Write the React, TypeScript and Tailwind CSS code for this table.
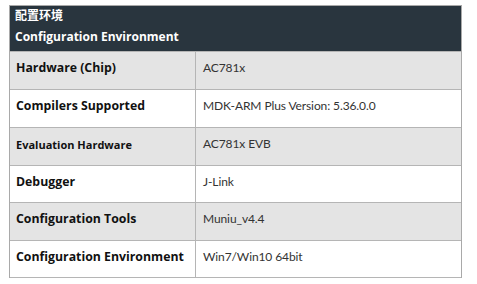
import React from "react";

type Row = {
  label: string;
  value: string;
  shaded: boolean;
  h: string;
  small?: boolean;
};

const rows: Row[] = [
  { label: "Hardware (Chip)", value: "AC781x", shaded: true, h: "h-[38px]" },
  { label: "Compilers Supported", value: "MDK-ARM Plus Version: 5.36.0.0", shaded: false, h: "h-[38px]" },
  { label: "Evaluation Hardware", value: "AC781x EVB", shaded: true, h: "h-[38px]", small: true },
  { label: "Debugger", value: "J-Link", shaded: false, h: "h-[37px]" },
  { label: "Configuration Tools", value: "Muniu_v4.4", shaded: true, h: "h-[38px]" },
  { label: "Configuration Environment", value: "Win7/Win10 64bit", shaded: false, h: "h-[37px]" },
];

export default function App() {
  return (
    <div className="w-[477px] h-[284px] bg-white pt-[5px] pl-[9px]">
      <div className="w-[453px] border border-[#a9a9a9] border-b-0">
        {/* header */}
        <div className="h-[45px] bg-[#29353e] pl-[5px] pt-[1px] flex flex-col">
          <div className="text-[12px] leading-[16px] font-bold text-white font-['Noto_Sans_CJK_SC',sans-serif]">
            配置环境
          </div>
          <div className="mt-[5px] text-[12px] leading-[18px] font-bold text-white font-['Open_Sans',sans-serif]">
            Configuration Environment
          </div>
        </div>
        {rows.map((r) => (
          <div
            key={r.label}
            className={`flex border-t border-[#b5b5b5] ${r.h} ${r.shaded ? "bg-[#e4e4e4]" : "bg-white"}`}
          >
            <div
              className={`w-[186px] border-r border-[#b5b5b5] pl-[6px] pt-[7px] font-bold text-[#111] font-['Open_Sans',sans-serif] ${
                r.small ? "text-[11px] leading-[18px] pt-[8px]" : "text-[12.3px] leading-[18px]"
              }`}
            >
              {r.label}
            </div>
            <div className="flex-1 pl-[7px] pt-[7px] text-[12px] leading-[18px] tracking-[-0.1px] text-[#333] font-['Lato',sans-serif]">
              {r.value}
            </div>
          </div>
        ))}
        <div className="border-t border-[#b5b5b5]" />
      </div>
    </div>
  );
}
